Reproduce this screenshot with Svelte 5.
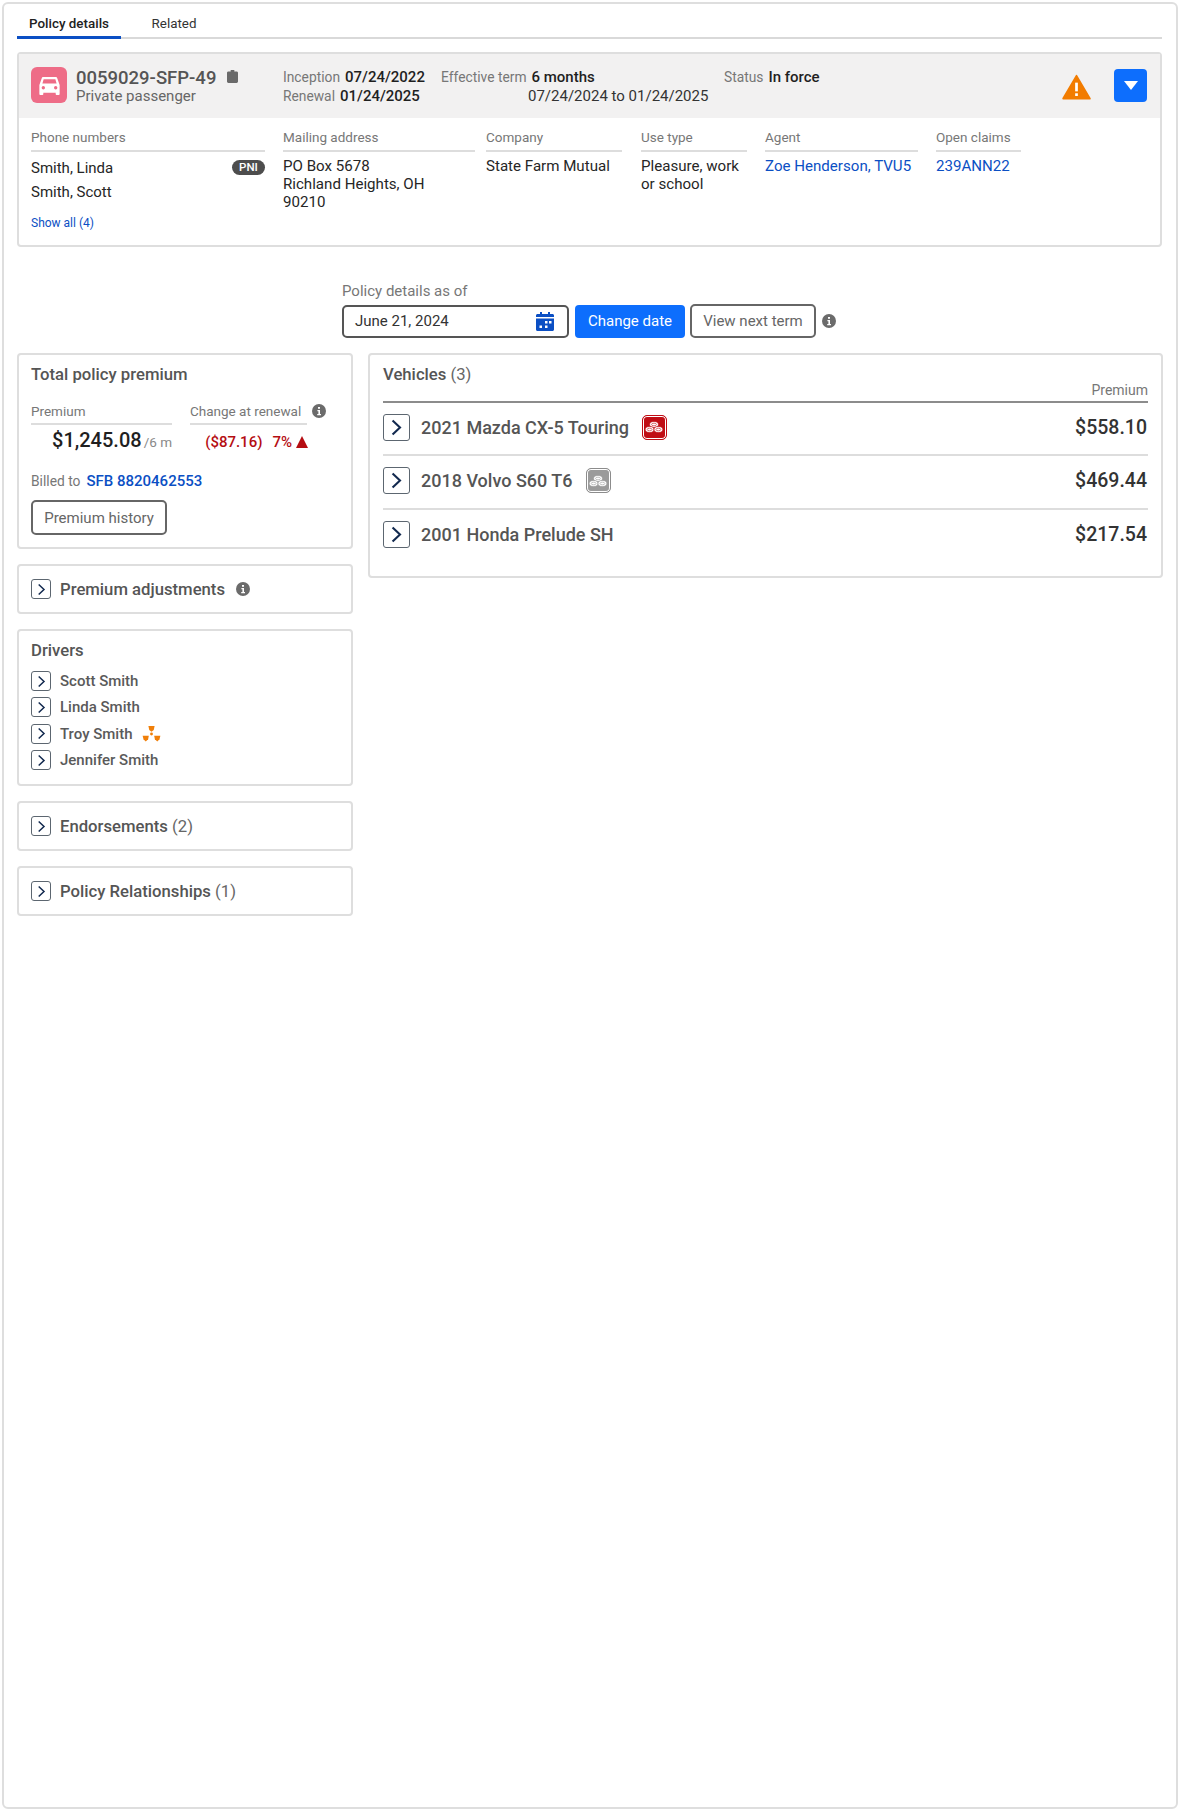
<script>
  const phones = ['Smith, Scott'];
  const drivers = [
    { name: 'Scott Smith' },
    { name: 'Linda Smith' },
    { name: 'Troy Smith', flag: true },
    { name: 'Jennifer Smith' }
  ];
  const vehicles = [
    { name: '2021 Mazda CX-5 Touring', price: '$558.10', badge: 'red' },
    { name: '2018 Volvo S60 T6', price: '$469.44', badge: 'grey' },
    { name: '2001 Honda Prelude SH', price: '$217.54', badge: '' }
  ];
</script>

{#snippet chevron(cls)}
  <span class="chev {cls}">
    <svg viewBox="0 0 24 24" aria-hidden="true"><path d="M7.500 4 16 12l-8.500 8" fill="none" stroke="#12294f" stroke-width="2.400"/></svg>
  </span>
{/snippet}

{#snippet info(cls)}
  <svg class="info {cls}" viewBox="0 0 14 14" aria-hidden="true">
    <circle cx="7" cy="7" r="7" fill="#6b6b6b"/>
    <rect x="6" y="3" width="2" height="1.800" fill="#fff"/>
    <path d="M5.400 6h2.600v4h1v1.200H5.200V10h1.200V7.200h-1z" fill="#fff"/>
  </svg>
{/snippet}

{#snippet sf(cls)}
  <span class="sf {cls}">
    <svg viewBox="0 0 20 20" aria-hidden="true">
      <g fill="#fff" stroke="currentColor" stroke-width="0.700">
        <ellipse cx="10" cy="7.500" rx="4.400" ry="3"/>
        <ellipse cx="5.600" cy="12.500" rx="4.400" ry="3"/>
        <ellipse cx="14.400" cy="12.500" rx="4.400" ry="3"/>
      </g>
      <g fill="none" stroke="currentColor" stroke-width="0.600">
        <ellipse cx="10" cy="7.500" rx="2.400" ry="1.300"/>
        <ellipse cx="5.600" cy="12.500" rx="2.400" ry="1.300"/>
        <ellipse cx="14.400" cy="12.500" rx="2.400" ry="1.300"/>
      </g>
    </svg>
  </span>
{/snippet}

<div class="frame">
  <nav class="tabs">
    <span class="tab active">Policy details</span>
    <span class="tab">Related</span>
  </nav>

  <section class="summary">
    <header class="sum-head">
      <div class="car">
        <svg viewBox="0 0 24 24" aria-hidden="true"><path fill="#fff" d="M18.900 5.500c-.2-.6-.8-1-1.400-1H6.500c-.7 0-1.200.4-1.400 1L3 11.500v8c0 .5.500 1 1 1h1.500c.6 0 1-.5 1-1v-1h11v1c0 .5.500 1 1 1H20c.6 0 1-.5 1-1v-8zM6.800 6.500h10.400l1.100 3.700H5.700zM6.500 15.500a1.500 1.500 0 1 1 0-3 1.500 1.500 0 0 1 0 3zm11 0a1.500 1.500 0 1 1 0-3 1.500 1.500 0 0 1 0 3z"/></svg>
      </div>
      <div class="ident">
        <div class="pol-no">0059029-SFP-49
          <svg class="clip" viewBox="0 0 12 14" aria-hidden="true"><path fill="#6a6a6a" d="M4 0h4v1.500h2.500c.8 0 1.500.7 1.500 1.500v9.500c0 .8-.7 1.500-1.500 1.500h-9C.7 14 0 13.300 0 12.500V3c0-.8.700-1.500 1.500-1.500H4z"/></svg>
        </div>
        <div class="pol-sub">Private passenger</div>
      </div>
      <div class="dates">
        <div><span class="lab">Inception</span><b>07/24/2022</b></div>
        <div><span class="lab">Renewal</span><b>01/24/2025</b></div>
      </div>
      <div class="term">
        <div><span class="lab">Effective term</span><b>6 months</b></div>
        <div class="range">07/24/2024 to 01/24/2025</div>
      </div>
      <div class="status"><span class="lab">Status</span><b>In force</b></div>
      <svg class="warn" viewBox="0 0 30 26" aria-hidden="true">
        <path d="M15 1.500 28.700 25H1.300z" fill="#f27c00" stroke="#f27c00" stroke-width="2" stroke-linejoin="round"/>
        <rect x="13.600" y="8.500" width="2.800" height="9" fill="#fff"/>
        <rect x="13.600" y="19.500" width="2.800" height="2.800" fill="#fff"/>
      </svg>
      <button class="drop" aria-label="Expand">
        <svg viewBox="0 0 14 9" aria-hidden="true"><path d="M0 0h14L7 9z" fill="#fff"/></svg>
      </button>
    </header>

    <div class="details">
      <div class="col c-phone">
        <div class="col-lab">Phone numbers</div>
        <div class="phone first"><span>Smith, Linda</span><span class="pni">PNI</span></div>
        {#each phones as p}<div class="phone"><span>{p}</span></div>{/each}
        <a class="show" href="#all">Show all (4)</a>
      </div>
      <div class="col c-mail">
        <div class="col-lab">Mailing address</div>
        <div class="val">PO Box 5678<br />Richland Heights, OH<br />90210</div>
      </div>
      <div class="col c-comp">
        <div class="col-lab">Company</div>
        <div class="val">State Farm Mutual</div>
      </div>
      <div class="col c-use">
        <div class="col-lab">Use type</div>
        <div class="val">Pleasure, work<br />or school</div>
      </div>
      <div class="col c-agent">
        <div class="col-lab">Agent</div>
        <div class="val"><a href="#agent">Zoe Henderson, TVU5</a></div>
      </div>
      <div class="col c-claims">
        <div class="col-lab">Open claims</div>
        <div class="val"><a href="#claims">239ANN22</a></div>
      </div>
    </div>
  </section>

  <section class="asof">
    <div class="asof-lab">Policy details as of</div>
    <div class="asof-row">
      <div class="date-input">
        <span>June 21, 2024</span>
        <svg viewBox="0 0 18 19" aria-hidden="true">
          <path fill="#0b4fc4" d="M4 0h2v2h6V0h2v2h2.500c.8 0 1.500.7 1.500 1.500V5H0V3.500C0 2.700.7 2 1.500 2H4zM0 6.500h18v11c0 .8-.7 1.500-1.500 1.500h-15C.7 19 0 18.300 0 17.500z"/>
          <g fill="#fff"><rect x="9" y="9" width="2.500" height="2.500"/><rect x="13" y="9" width="2.500" height="2.500"/><rect x="3.500" y="13.500" width="2.500" height="2.500"/><rect x="9" y="13.500" width="2.500" height="2.500"/></g>
        </svg>
      </div>
      <button class="primary">Change date</button>
      <button class="ghost next">View next term</button>
      {@render info('asof-i')}
    </div>
  </section>

  <div class="columns">
    <div class="left">
      <section class="card total">
        <h2>Total policy premium</h2>
        <div class="prem-grid">
          <div class="p-col">
            <div class="col-lab">Premium</div>
            <div class="amount"><b>$1,245.08</b><span>/6 m</span></div>
          </div>
          <div class="c-col">
            <div class="col-lab">Change at renewal</div>
            <div class="change"><span>($87.16)</span><span>7%</span><i class="tri"></i></div>
          </div>
          {@render info('ren-i')}
        </div>
        <div class="billed"><span class="lab">Billed to</span><a href="#sfb">SFB 8820462553</a></div>
        <button class="ghost hist">Premium history</button>
      </section>

      <section class="card bar">
        {@render chevron('sm')}
        <h2>Premium adjustments</h2>
        {@render info('adj-i')}
      </section>

      <section class="card driversc">
        <h2>Drivers</h2>
        <ul>
          {#each drivers as d}
            <li>
              {@render chevron('sm')}
              <span>{d.name}</span>
              {#if d.flag}
                <svg class="rad" viewBox="0 0 20 18" aria-hidden="true">
                  <g fill="#f07f09">
                    <path d="M6.500 0h7l-1 4.500L10 6.500 7.500 4.500z"/>
                    <path d="M0 11h7l-.8 4-2.700 2.500L1 15z"/>
                    <path d="M13 11h7l-1 4-2.500 2.500L13.800 15z"/>
                    <circle cx="10" cy="9" r="1.600"/>
                  </g>
                </svg>
              {/if}
            </li>
          {/each}
        </ul>
      </section>

      <section class="card bar">
        {@render chevron('sm')}
        <h2>Endorsements <em>(2)</em></h2>
      </section>

      <section class="card bar">
        {@render chevron('sm')}
        <h2>Policy Relationships <em>(1)</em></h2>
      </section>
    </div>

    <section class="card veh">
      <h2>Vehicles <em>(3)</em></h2>
      <div class="veh-lab">Premium</div>
      <div class="veh-list">
        {#each vehicles as v}
          <div class="veh-row">
            {@render chevron('lg')}
            <span class="veh-name">{v.name}</span>
            {#if v.badge}{@render sf(v.badge)}{/if}
            <span class="price">{v.price}</span>
          </div>
        {/each}
      </div>
    </section>
  </div>
</div>

<style>
  :global(body) {
    margin: 0;
    background: #fff;
    font-family: Roboto, "Liberation Sans", sans-serif;
  }
  .frame {
    box-sizing: border-box;
    width: 1176px;
    height: 1807px;
    margin: 2px 0 0 2px;
    padding: 11px 14px 0 13px;
    border: 2px solid #dedede;
    border-radius: 6px;
    color: #2b2b2b;
    font-size: 15px;
  }
  button { font-family: inherit; cursor: pointer; }
  a { color: #0b4fc4; text-decoration: none; }
  b { font-weight: 500; color: #1f1f1f; }
  h2 { margin: 0; font-size: 16.700px; font-weight: 500; color: #555; }
  em { font-style: normal; font-weight: 400; color: #666; }

  .tabs { display: flex; height: 22px; border-bottom: 2px solid #d9d9d9; }
  .tab { position: relative; padding: 0 12px; width: 80px; font-size: 13.400px; line-height: 18px; color: #333; text-align: center; white-space: nowrap; }
  .tab + .tab { margin-left: 16px; width: 50px; }
  .tab.active { font-weight: 500; color: #222; }
  .tab.active::after { content: ""; position: absolute; left: 0; right: 0; bottom: -2px; height: 3px; background: #0b4fc4; }

  .summary { margin-top: 13px; height: 195px; box-sizing: border-box; border: 2px solid #dedede; border-radius: 4px; }
  .sum-head { display: flex; align-items: flex-start; height: 64px; box-sizing: border-box; padding: 13px 14px 0 12px; background: #f2f1f1; position: relative; }
  .car { flex: none; width: 36px; height: 36px; border-radius: 6px; background: #ee6c87; display: flex; align-items: center; justify-content: center; }
  .car svg { width: 27px; height: 27px; }
  .ident { width: 207px; margin-left: 9px; flex: none; }
  .pol-no { display: flex; align-items: center; font-size: 18.500px; line-height: 20px; font-weight: 500; color: #555; margin-top: 1px; }
  .clip { width: 11px; height: 13px; margin-left: 11px; margin-top: -3px; }
  .pol-sub { font-size: 15px; line-height: 18px; color: #666; margin-top: -1px; }
  .lab { font-size: 13.800px; color: #777; margin-right: 5px; }
  .dates { flex: none; width: 157px; font-size: 15px; line-height: 19px; margin-top: 1px; }
  .term { flex: none; width: 284px; font-size: 15px; line-height: 19px; margin-top: 1px; padding-left: 1px; margin-right: -1px; }
  .range { margin-left: 87px; color: #333; white-space: nowrap; }
  .status { flex: none; font-size: 15px; line-height: 19px; margin-top: 1px; }
  .warn { position: absolute; right: 69px; top: 20px; width: 29px; height: 26px; }
  .drop { position: absolute; right: 13px; top: 15px; width: 33px; height: 33px; padding: 0; border: 0; border-radius: 4px; background: #0d6efd; display: flex; align-items: center; justify-content: center; }
  .drop svg { width: 14px; height: 9px; }

  .details { display: flex; padding: 11px 0 0 12px; }
  .col { flex: none; }
  .col-lab { font-size: 13.500px; line-height: 17px; color: #777; padding-bottom: 4px; border-bottom: 2px solid #ddd; white-space: nowrap; }
  .c-phone { width: 234px; margin-right: 18px; }
  .c-mail { width: 192px; margin-right: 11px; }
  .c-comp { width: 136px; margin-right: 19px; }
  .c-use { width: 106px; margin-right: 18px; }
  .c-agent { width: 153px; margin-right: 18px; }
  .c-claims { width: 85px; }
  .val { margin-top: 5px; font-size: 15.100px; line-height: 18px; color: #262626; white-space: nowrap; }
  .phone { display: flex; justify-content: space-between; align-items: center; height: 24px; color: #262626; }
  .phone.first { margin-top: 4px; }
  .pni { display: block; width: 33px; height: 15px; border-radius: 8px; background: #4d4d4d; color: #fff; font-size: 11.500px; font-weight: 500; line-height: 15px; text-align: center; margin-top: -2px; }
  .show { display: block; margin-top: 12px; font-size: 12px; line-height: 14px; }

  .asof { margin: 35px 0 0 325px; }
  .asof-lab { font-size: 15px; line-height: 18px; color: #777; }
  .asof-row { display: flex; align-items: center; margin-top: 4px; }
  .date-input { box-sizing: border-box; width: 227px; height: 33px; border: 2px solid #555; border-radius: 5px; display: flex; align-items: center; justify-content: space-between; padding: 0 13px 0 11px; color: #333; font-size: 15px; }
  .date-input svg { width: 18px; height: 19px; }
  .primary { margin-left: 6px; width: 110px; height: 33px; border: 0; border-radius: 4px; background: #0d6efd; color: #fff; font-size: 15px; }
  .ghost { box-sizing: border-box; background: #fff; border: 2px solid #666; border-radius: 5px; color: #666; font-size: 15px; }
  .next { margin-left: 5px; width: 126px; height: 34px; }
  .info { display: block; flex: none; width: 14px; height: 14px; }
  :global(.asof-i) { margin-left: 6px; }

  .columns { display: grid; grid-template-columns: 336px 795px; column-gap: 15px; margin-top: 15px; align-items: start; }
  .left { display: flex; flex-direction: column; gap: 15px; }
  .card { box-sizing: border-box; border: 2px solid #dedede; border-radius: 4px; }

  .total { height: 196px; padding: 10px 12px 0; }
  .prem-grid { display: flex; margin-top: 19px; position: relative; }
  .prem-grid .col-lab { padding-bottom: 3px; }
  .p-col { width: 141px; }
  .c-col { width: 117px; margin-left: 18px; }
  .amount { display: flex; justify-content: flex-end; align-items: baseline; gap: 2px; margin-top: 2px; line-height: 26px; }
  .amount b { font-size: 20px; }
  .amount span { font-size: 13.500px; color: #888; }
  .change { display: flex; align-items: center; justify-content: flex-end; margin-top: 5px; margin-right: -1px; line-height: 24px; color: #b50d12; font-size: 15px; font-weight: 500; gap: 10px; }
  .tri { width: 0; height: 0; border-left: 6px solid transparent; border-right: 6px solid transparent; border-bottom: 12px solid #b50d12; margin-left: -6px; }
  :global(.ren-i) { position: absolute; left: 281px; top: 1px; }
  .billed { margin-top: 17px; line-height: 18px; }
  .billed a { font-weight: 500; color: #0b4fc4; font-size: 15px; }
  .billed .lab { margin-right: 6px; }
  .hist { display: block; margin-top: 10px; width: 136px; height: 35px; }

  .bar { display: flex; align-items: center; height: 50px; padding: 0 12px; }
  .bar h2 { margin-left: 9px; }
  :global(.adj-i) { margin-left: 11px; }

  .chev { box-sizing: border-box; flex: none; display: flex; align-items: center; justify-content: center; background: #fff; border: 1.500px solid #5c6670; border-radius: 3px; }
  .chev.sm { width: 20px; height: 20px; }
  .chev.sm svg { width: 15px; height: 15px; }
  .chev.lg { width: 27px; height: 27px; }
  .chev.lg svg { width: 21px; height: 21px; }

  .driversc { height: 157px; padding: 10px 12px 0; }
  ul { list-style: none; margin: 8px 0 0; padding: 0; }
  li { display: flex; align-items: center; height: 26.300px; font-size: 15px; font-weight: 500; color: #5a5a5a; }
  li span:not(.chev) { margin-left: 9px; }
  .rad { width: 19px; height: 16px; margin-left: 9px; }

  .veh { height: 225px; padding: 10px 13px 0; }
  .veh-lab { text-align: right; font-size: 14px; line-height: 16px; color: #777; margin-top: -2px; }
  .veh-list { margin-top: 3px; border-top: 2px solid #8c8c8c; }
  .veh-row { display: flex; align-items: center; height: 54px; padding-bottom: 3px; box-sizing: border-box; border-top: 2px solid #ddd; }
  .veh-row:first-child { border-top: 0; height: 51px; }
  .veh-name { margin-left: 11px; font-size: 18px; font-weight: 500; color: #555; }
  .price { margin-left: auto; font-size: 19.500px; font-weight: 500; color: #333; padding-right: 1px; }
  .sf { display: flex; align-items: center; justify-content: center; box-sizing: border-box; width: 25px; height: 25px; margin-left: 13px; border-radius: 5px; border: 1.500px solid; box-shadow: inset 0 0 0 1px #fff; }
  .sf svg { width: 20px; height: 20px; }
  .sf.red { background: #c00d14; color: #c00d14; border-color: #c00d14; }
  .sf.grey { background: #9b9b9b; color: #9b9b9b; border-color: #8c8c8c; }
</style>
